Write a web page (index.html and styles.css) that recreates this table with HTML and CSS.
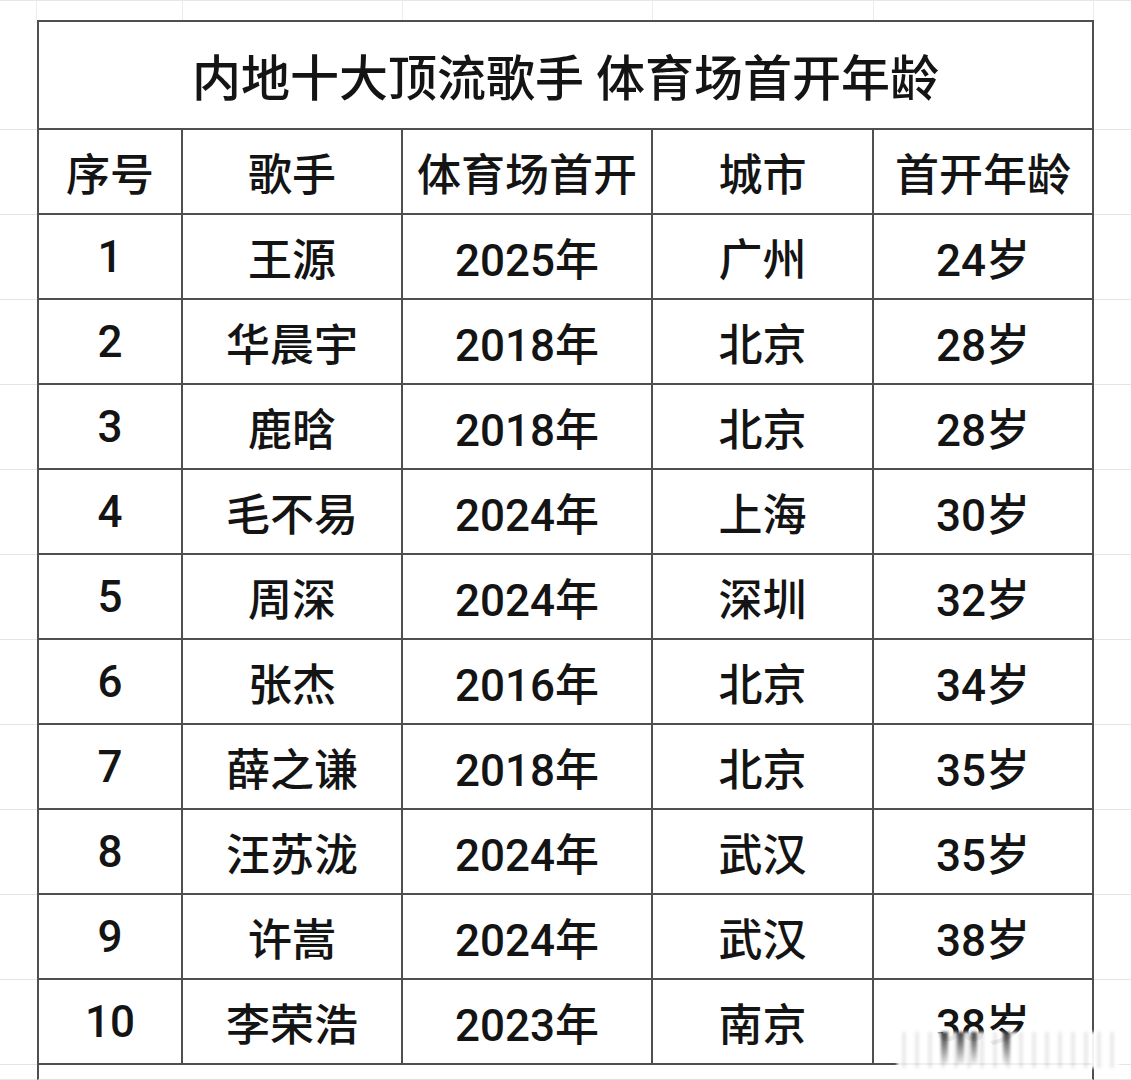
FILE: index.html
```html
<!DOCTYPE html>
<html lang="zh-CN">
<head>
<meta charset="utf-8">
<title>内地十大顶流歌手 体育场首开年龄</title>
<link rel="stylesheet" href="styles.css">
</head>
<body>
<div class="sheet">
  <div class="g top"></div><div class="g top"></div><div class="g top"></div><div class="g top"></div><div class="g top"></div><div class="g top"></div><div class="g top last"></div>

  <div class="g side"></div>
  <div class="c title">内地十大顶流歌手 体育场首开年龄</div>
  <div class="g side"></div>

  <div class="g side"></div>
  <div class="c first">序号</div><div class="c">歌手</div><div class="c">体育场首开</div><div class="c">城市</div><div class="c">首开年龄</div>
  <div class="g side"></div>

  <div class="g side"></div>
  <div class="c first">1</div><div class="c">王源</div><div class="c">2025年</div><div class="c">广州</div><div class="c">24岁</div>
  <div class="g side"></div>

  <div class="g side"></div>
  <div class="c first">2</div><div class="c">华晨宇</div><div class="c">2018年</div><div class="c">北京</div><div class="c">28岁</div>
  <div class="g side"></div>

  <div class="g side"></div>
  <div class="c first">3</div><div class="c">鹿晗</div><div class="c">2018年</div><div class="c">北京</div><div class="c">28岁</div>
  <div class="g side"></div>

  <div class="g side"></div>
  <div class="c first">4</div><div class="c">毛不易</div><div class="c">2024年</div><div class="c">上海</div><div class="c">30岁</div>
  <div class="g side"></div>

  <div class="g side"></div>
  <div class="c first">5</div><div class="c">周深</div><div class="c">2024年</div><div class="c">深圳</div><div class="c">32岁</div>
  <div class="g side"></div>

  <div class="g side"></div>
  <div class="c first">6</div><div class="c">张杰</div><div class="c">2016年</div><div class="c">北京</div><div class="c">34岁</div>
  <div class="g side"></div>

  <div class="g side"></div>
  <div class="c first">7</div><div class="c">薛之谦</div><div class="c">2018年</div><div class="c">北京</div><div class="c">35岁</div>
  <div class="g side"></div>

  <div class="g side"></div>
  <div class="c first">8</div><div class="c">汪苏泷</div><div class="c">2024年</div><div class="c">武汉</div><div class="c">35岁</div>
  <div class="g side"></div>

  <div class="g side"></div>
  <div class="c first">9</div><div class="c">许嵩</div><div class="c">2024年</div><div class="c">武汉</div><div class="c">38岁</div>
  <div class="g side"></div>

  <div class="g side"></div>
  <div class="c first">10</div><div class="c">李荣浩</div><div class="c">2023年</div><div class="c">南京</div><div class="c">38岁</div>
  <div class="g side"></div>

  <div class="g foot"></div>
  <div class="c note"></div>
  <div class="g foot"></div>
</div>
<div class="watermark">
  <span class="streak s1"></span><span class="streak s2"></span><span class="streak s3"></span><span class="streak s4"></span>
</div>
</body>
</html>
```

FILE: styles.css
```css
html, body {
  margin: 0;
  padding: 0;
  background: #ffffff;
}

body {
  position: relative;
  width: 1131px;
  height: 1080px;
  overflow: hidden;
  font-family: Roboto, "Noto Sans CJK SC", sans-serif;
  color: #141414;
}

.sheet {
  display: grid;
  grid-template-columns: 37px 146px 220px 250px 221px 220px 1fr;
  grid-template-rows: 20px 110px repeat(11, 85px) 1fr;
  height: 1080px;
}

.g {
  box-sizing: border-box;
}

.top {
  border-top: 1px solid #e6e6e6;
  border-right: 1px solid #ececec;
}

.top.last {
  border-right: none;
}

.side {
  border-bottom: 1px solid #e4e4e4;
}

.foot {
  border-bottom: 1px solid #e8e8e8;
}

.c {
  box-sizing: border-box;
  display: flex;
  align-items: center;
  justify-content: center;
  border-right: 2px solid #4f4f4f;
  border-bottom: 2px solid #4f4f4f;
  font-size: 44px;
  font-weight: 500;
  white-space: nowrap;
}

.first {
  border-left: 2px solid #4f4f4f;
}

.title {
  grid-column: span 5;
  border-left: 2px solid #4f4f4f;
  border-top: 2px solid #4f4f4f;
  font-size: 49px;
  padding-bottom: 2px;
}

.note {
  grid-column: span 5;
  border-left: 2px solid #4f4f4f;
  border-bottom: 1px solid #e0e0e0;
}

.watermark {
  position: absolute;
  left: 897px;
  top: 1032px;
  width: 222px;
  height: 36px;
  background:
    repeating-linear-gradient(90deg, rgba(255,255,255,0.92) 0 5px, rgba(232,232,232,0.92) 5px 9px, rgba(255,255,255,0.92) 9px 13px);
  filter: blur(1.5px);
}

.streak {
  position: absolute;
  top: 0;
  height: 32px;
  width: 7px;
  background: linear-gradient(180deg, rgba(30,30,30,0.85), rgba(150,150,150,0.15));
}

.s1 { left: 44px; }
.s2 { left: 60px; }
.s3 { left: 74px; width: 6px; }
.s4 { left: 106px; }
```
